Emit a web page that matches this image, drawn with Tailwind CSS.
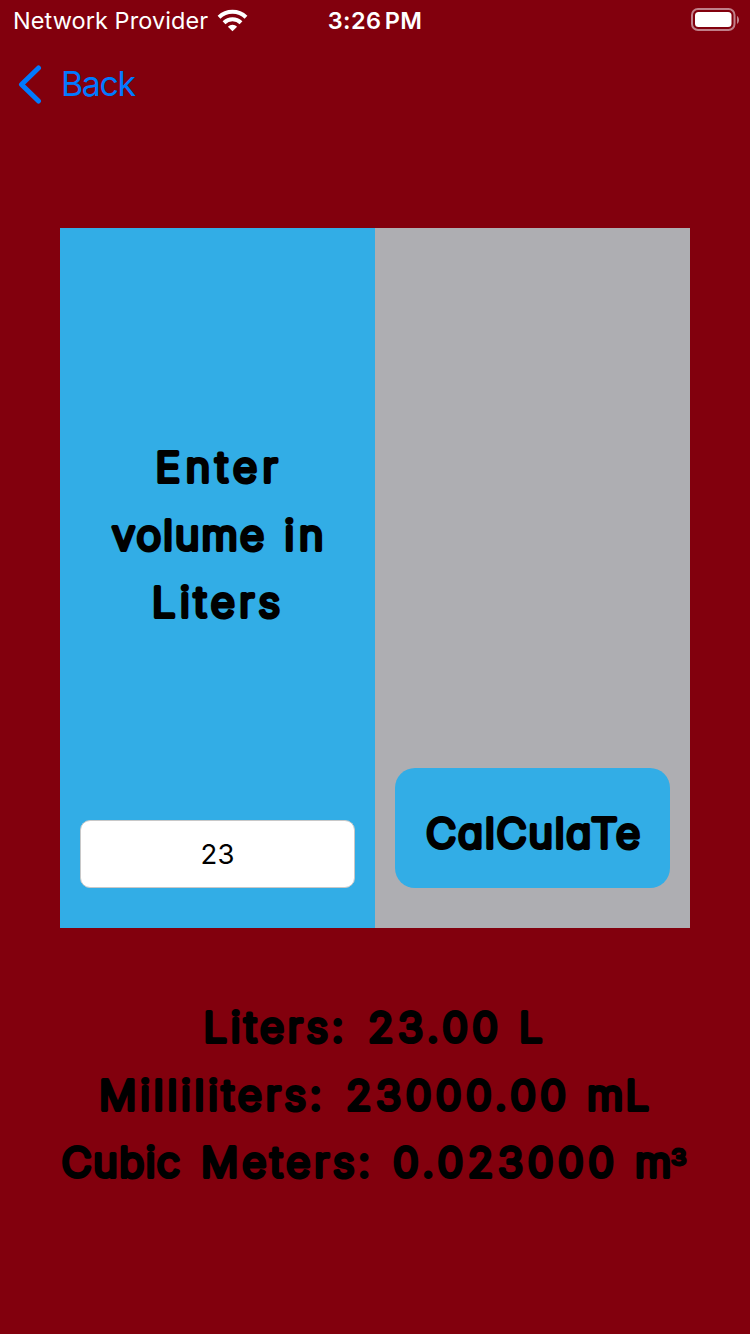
<!DOCTYPE html>
<html lang="en">
<head>
<meta charset="utf-8">
<title>Volume</title>
<script src="https://cdn.jsdelivr.net/npm/@tailwindcss/browser@4"></script>
</head>
<body class="w-[750px] h-[1334px] overflow-hidden bg-[#82000d] font-['Inter','Liberation_Sans',sans-serif] text-black flex flex-col">
  <header class="h-10 grid grid-cols-[250px_250px_250px] items-center text-white leading-[38px] shrink-0">
    <div class="flex items-center pl-[13px] whitespace-nowrap">
      <span class="w-[204px] shrink-0 pt-[2px] text-[23.5px] tracking-[0.07px]">Network Provider</span>
      <svg class="w-[31px] h-[23px] shrink-0" viewBox="0 0 31 23" fill="none" stroke="white" stroke-width="4">
        <path d="M2 8.200a19.500 19.500 0 0 1 27 0M7 13.700a12.200 12.200 0 0 1 17 0"/>
        <path d="M15.500 22.300l-4.600-4.600a6.500 6.500 0 0 1 9.200 0z" fill="white" stroke="none"/>
      </svg>
    </div>
    <div class="text-center pt-[2px] font-semibold whitespace-nowrap text-[23.5px] tracking-[0.4px] [word-spacing:-3px]">3:26 PM</div>
    <div class="flex justify-end pr-[11px]">
      <svg class="w-[48px] h-[24px]" viewBox="0 0 48 24">
        <rect x="1" y="1" width="42.500" height="21" rx="6" fill="none" stroke="#c0808a" stroke-width="2"/>
        <rect x="4" y="4" width="36.500" height="15" rx="3.500" fill="white"/>
        <path d="M46 8c2.700 1.500 2.700 6.500 0 8z" fill="#c0808a"/>
      </svg>
    </div>
  </header>
  <nav class="h-[88px] flex items-center pl-[18px] gap-[19px] text-[#007aff] shrink-0">
    <svg class="w-[24px] h-[40px]" viewBox="0 0 24 40" fill="none" stroke="#007aff" stroke-width="5" stroke-linecap="round" stroke-linejoin="round"><path d="M20.500 4L3.500 20.500 20.500 37"/></svg>
    <span class="text-[34px] tracking-[-1.4px] pb-px">Back</span>
  </nav>
  <main class="mt-[100px] mx-[60px] h-[700px] grid grid-cols-2 shrink-0">
    <section class="bg-[#32ade6] flex flex-col px-5 pb-10">
      <svg class="w-[275px] h-[592px] text-[41.5px] font-light [font-feature-settings:'cv11']" viewBox="80 228 275 592" stroke="black" stroke-width="4.200" stroke-linejoin="round" stroke-linecap="round">
        <text x="155.500" y="482.200" textLength="122">Enter</text>
        <text x="112" y="549.700" textLength="152">volume</text>
        <text x="284.500" y="549.700" textLength="39">in</text>
        <text x="152" y="617.200" textLength="128">Liters</text>
      </svg>
      <div class="h-[68px] rounded-[10px] bg-white border border-[#c8c8c8] flex items-center justify-center pt-px text-[27.5px]">23</div>
    </section>
    <section class="bg-[#aeaeb2] flex flex-col justify-end px-5 pb-10">
      <button class="h-[120px] rounded-[20px] bg-[#32ade6]">
        <svg class="w-[275px] h-[120px] text-[41.5px] font-light [font-feature-settings:'cv11']" viewBox="395 768 275 120" stroke="black" stroke-width="4.200" stroke-linejoin="round" stroke-linecap="round">
          <text x="426" y="847.500" textLength="214">CalCulaTe</text>
        </svg>
      </button>
    </section>
  </main>
  <footer class="shrink-0">
    <svg class="w-[750px] h-[406px] text-[41.5px] font-light [font-feature-settings:'cv11']" viewBox="0 928 750 406" stroke="black" stroke-width="4.200" stroke-linejoin="round" stroke-linecap="round">
      <text x="203.500" y="1042.200" textLength="140">Liters:</text>
      <text x="368" y="1042.200" textLength="130">23.00</text>
      <text x="519" y="1042.200">L</text>
      <text x="99" y="1110" textLength="222.500">Milliliters:</text>
      <text x="346" y="1110" textLength="220">23000.00</text>
      <text x="587" y="1110" textLength="62">mL</text>
      <text x="61.500" y="1177.200" textLength="118.500">Cubic</text>
      <text x="201" y="1177.200" textLength="169">Meters:</text>
      <text x="393" y="1177.200" textLength="221">0.023000</text>
      <text x="635" y="1177.200">m<tspan class="text-[39px]" dy="5" dx="-1" stroke-width="2.800">³</tspan></text>
    </svg>
  </footer>
</body>
</html>
